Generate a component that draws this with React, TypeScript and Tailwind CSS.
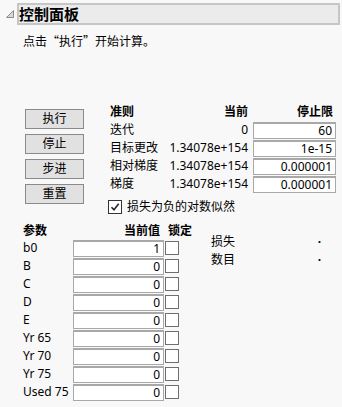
import type { ReactNode } from "react";

const FONT = {
  fontFamily:
    '"Noto Sans", "Noto Sans CJK SC", "Liberation Sans", sans-serif',
};

const CJK = {
  fontFamily: '"Noto Sans CJK SC", "Noto Sans", sans-serif',
};

const criteria = [
  { name: "迭代", current: "0", limit: "60" },
  { name: "目标更改", current: "1.34078e+154", limit: "1e-15" },
  { name: "相对梯度", current: "1.34078e+154", limit: "0.000001" },
  { name: "梯度", current: "1.34078e+154", limit: "0.000001" },
];

const params = [
  { name: "b0", value: "1" },
  { name: "B", value: "0" },
  { name: "C", value: "0" },
  { name: "D", value: "0" },
  { name: "E", value: "0" },
  { name: "Yr 65", value: "0" },
  { name: "Yr 70", value: "0" },
  { name: "Yr 75", value: "0" },
  { name: "Used 75", value: "0" },
];

function ActionButton({ children }: { children: ReactNode }) {
  return (
    <button
      type="button"
      className="flex h-[20px] w-[59px] items-center justify-center border border-[#8a8a8a] bg-[#e1e1e1] text-[12px] leading-none text-black"
    >
      {children}
    </button>
  );
}

function NumberBox({ value, width }: { value: string; width: string }) {
  return (
    <div
      className={`${width} flex h-[17px] items-center justify-end border border-[#a8a8a8] border-t-2 bg-white pr-[3px] text-[12px] leading-none text-black`}
    >
      {value}
    </div>
  );
}

export default function App() {
  return (
    <div
      className="h-[407px] w-[342px] overflow-hidden bg-[#f8f8f8] pt-[3px] text-black"
      style={FONT}
    >
      {/* outline header */}
      <div className="flex items-center">
        <svg width="17" height="22" viewBox="0 0 17 22" className="shrink-0">
          <path
            d="M13.5 7.5 L13.5 14.5 L6.5 14.5 Z"
            fill="#d8d8d8"
            stroke="#8c8c8c"
            strokeWidth="1"
          />
        </svg>
        <div className="flex h-[22px] w-[323px] items-center border-2 border-[#c6c6c6] bg-[#ebebeb] pl-0 text-[15px] font-bold leading-none">
          控制面板
        </div>
      </div>

      <p className="mt-[8px] pl-[23px] text-[12px] leading-[16px]" style={CJK}>
        点击“执行”开始计算。
      </p>

      {/* buttons + criteria */}
      <div className="mt-[54px] flex">
        <div className="flex flex-col gap-[5px] pl-[25px] pt-[6px]">
          <ActionButton>执行</ActionButton>
          <ActionButton>停止</ActionButton>
          <ActionButton>步进</ActionButton>
          <ActionButton>重置</ActionButton>
        </div>

        <div className="ml-[26px] flex flex-col">
          <div className="flex h-[18px] items-center text-[12px] font-bold leading-none">
            <span className="w-[58px]">准则</span>
            <span className="w-[80px] text-right">当前</span>
            <span className="ml-[5px] w-[83px] pr-[3px] text-right">停止限</span>
          </div>
          {criteria.map((row) => (
            <div
              key={row.name}
              className="flex h-[18px] items-center text-[12px] leading-none"
            >
              <span className="w-[58px]">{row.name}</span>
              <span className="w-[80px] text-right">{row.current}</span>
              <div className="ml-[5px]">
                <NumberBox value={row.limit} width="w-[83px]" />
              </div>
            </div>
          ))}

          <div className="-ml-[2px] mt-[7px] flex h-[14px] items-center text-[12px] leading-none">
            <span className="flex h-[14px] w-[14px] items-center justify-center border border-[#333333] bg-white">
              <svg width="10" height="10" viewBox="0 0 10 10">
                <path
                  d="M1.5 5.2 L4 7.8 L8.7 1.8"
                  fill="none"
                  stroke="#222"
                  strokeWidth="1.5"
                />
              </svg>
            </span>
            <span className="ml-[5px]">损失为负的对数似然</span>
          </div>
        </div>
      </div>

      {/* parameters */}
      <div className="mt-[9px] flex">
        <div className="flex flex-col pl-[23px]">
          <div className="flex h-[16px] items-center text-[12px] font-bold leading-none">
            <span className="w-[50px]">参数</span>
            <span className="w-[91px] pr-[4px] text-right">当前值</span>
            <span className="ml-[4px]">锁定</span>
          </div>
          {params.map((p) => (
            <div
              key={p.name}
              className="flex h-[18px] items-center text-[12px] leading-none"
            >
              <span className="w-[50px] whitespace-nowrap">{p.name}</span>
              <NumberBox value={p.value} width="w-[91px]" />
              <span className="ml-[1px] h-[14px] w-[14px] border border-[#6e6e6e] bg-white" />
            </div>
          ))}
        </div>

        <div className="ml-[19px] mt-[10px] flex w-[110px] flex-col text-[12px] leading-[18px]">
          <div className="flex justify-between">
            <span>损失</span>
            <span className="font-bold">·</span>
          </div>
          <div className="flex justify-between">
            <span>数目</span>
            <span className="font-bold">·</span>
          </div>
        </div>
      </div>
    </div>
  );
}
